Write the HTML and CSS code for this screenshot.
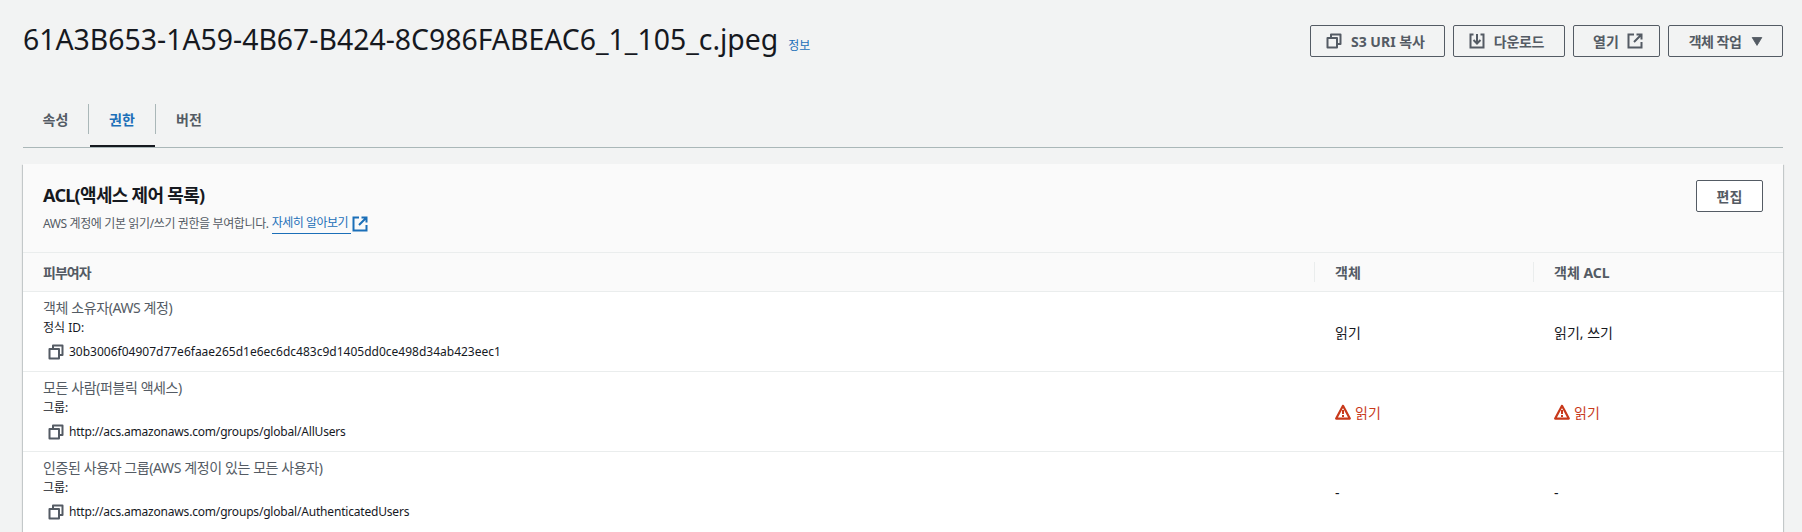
FILE: index.html
```html
<!DOCTYPE html>
<html lang="ko">
<head>
    <meta charset="UTF-8">
    <title>61A3B653-1A59-4B67-B424-8C986FABEAC6_1_105_c.jpeg</title>
    <link rel="stylesheet" href="styles.css">
</head>
<body>
    <svg class="sprites" width="0" height="0">
        <symbol id="i-copy" viewBox="0 0 16 16">
            <path d="M5 5V1.500h9.500V11H11M1.500 5H11v9.500H1.500z" fill="none" stroke="currentColor" stroke-width="2" stroke-linejoin="round"/>
        </symbol>
        <symbol id="i-external" viewBox="0 0 16 16">
            <path d="M7 1.500H1.500v13h13V9M9.500 1.500h5v5M14.500 1.500L7 9" fill="none" stroke="currentColor" stroke-width="2"/>
        </symbol>
        <symbol id="i-warning" viewBox="0 0 16 16">
            <path d="M8 1.800L1.200 14.600h13.600z" fill="none" stroke="currentColor" stroke-width="2.200" stroke-linejoin="round"/>
            <path d="M7 6h2v4H7zM7 11h2v2H7z" fill="currentColor"/>
        </symbol>
    </svg>

    <div class="page">
        <header class="page-head">
            <div class="title-wrap">
                <h1>61A3B653-1A59-4B67-B424-8C986FABEAC6_1_105_c.jpeg</h1>
                <a class="info" href="#">정보</a>
            </div>
            <div class="actions">
                <button class="btn btn-uri"><svg class="icon"><use href="#i-copy"/></svg>S3 URI 복사</button>
                <button class="btn btn-down">
                    <svg class="icon" viewBox="0 0 16 16"><path d="M4.500 1.500h-3v13h13v-13h-3M8 1v9M4.500 7L8 10.500 11.500 7" fill="none" stroke="currentColor" stroke-width="2"/></svg>다운로드
                </button>
                <button class="btn btn-open">열기<svg class="icon"><use href="#i-external"/></svg></button>
                <button class="btn btn-menu">객체 작업<svg class="icon caret" viewBox="0 0 16 16"><path d="M2.500 4h11L8 13z" fill="currentColor" stroke="currentColor" stroke-linejoin="round"/></svg></button>
            </div>
        </header>

        <nav class="tabs">
            <a class="tab" href="#">속성</a>
            <a class="tab active" href="#">권한</a>
            <a class="tab" href="#">버전</a>
        </nav>

        <section class="card">
            <div class="card-head">
                <div>
                    <h2>ACL(액세스 제어 목록)</h2>
                    <p class="desc">AWS 계정에 기본 읽기/쓰기 권한을 부여합니다. <a href="#" class="learn">자세히 알아보기 </a><svg class="icon ext"><use href="#i-external"/></svg></p>
                </div>
                <button class="btn btn-edit">편집</button>
            </div>

            <div class="row row-head">
                <div class="cell grantee-head">피부여자</div>
                <div class="cell"><span class="sep"></span>객체</div>
                <div class="cell"><span class="sep"></span>객체 ACL</div>
            </div>

            <div class="row">
                <div class="cell grantee">
                    <div class="name">객체 소유자(AWS 계정)</div>
                    <div class="kind">정식 ID:</div>
                    <div class="value"><svg class="icon"><use href="#i-copy"/></svg>30b3006f04907d77e6faae265d1e6ec6dc483c9d1405dd0ce498d34ab423eec1</div>
                </div>
                <div class="cell">읽기</div>
                <div class="cell">읽기, 쓰기</div>
            </div>

            <div class="row">
                <div class="cell grantee">
                    <div class="name">모든 사람(퍼블릭 액세스)</div>
                    <div class="kind">그룹:</div>
                    <div class="value url"><svg class="icon"><use href="#i-copy"/></svg>http://acs.amazonaws.com/groups/global/AllUsers</div>
                </div>
                <div class="cell warn"><svg class="icon"><use href="#i-warning"/></svg>읽기</div>
                <div class="cell warn"><svg class="icon"><use href="#i-warning"/></svg>읽기</div>
            </div>

            <div class="row row-last">
                <div class="cell grantee">
                    <div class="name">인증된 사용자 그룹(AWS 계정이 있는 모든 사용자)</div>
                    <div class="kind">그룹:</div>
                    <div class="value url"><svg class="icon"><use href="#i-copy"/></svg>http://acs.amazonaws.com/groups/global/AuthenticatedUsers</div>
                </div>
                <div class="cell">-</div>
                <div class="cell">-</div>
            </div>
        </section>
    </div>
</body>
</html>
```
FILE: styles.css
```css
html, body {
    margin: 0;
    padding: 0;
    height: 532px;
    overflow: hidden;
}

body {
    background-color: #f2f3f3;
    color: #16191f;
    font-family: "Noto Sans", "Noto Sans CJK KR", sans-serif;
    font-size: 14px;
}

a {
    text-decoration: none;
}

.sprites {
    display: block;
    height: 0;
}

.page {
    padding: 0 19px 0 23px;
}

.icon {
    width: 16px;
    height: 16px;
    flex: none;
}

.page-head {
    display: flex;
    justify-content: space-between;
    align-items: flex-start;
    height: 83px;
}

.title-wrap {
    display: flex;
    align-items: baseline;
    gap: 10px;
    padding-top: 19px;
}

h1 {
    margin: 0;
    font-size: 28.400px;
    line-height: 40px;
    font-weight: 400;
    white-space: nowrap;
}

.info {
    color: #1b6fb8;
    font-size: 12px;
}

.actions {
    display: flex;
    gap: 8px;
    padding-top: 25px;
}

.btn {
    display: flex;
    align-items: center;
    justify-content: center;
    gap: 9px;
    height: 32px;
    padding: 0;
    background: transparent;
    border: 1px solid #545b64;
    border-radius: 2px;
    color: #545b64;
    font-family: inherit;
    font-size: 14px;
    font-weight: 700;
}

.btn-uri { width: 135px; padding-right: 4px; }
.btn-down { width: 112px; padding-right: 5px; letter-spacing: -0.300px; }
.btn-open { width: 87px; gap: 8px; padding-left: 3px; }
.btn-menu { width: 115px; gap: 9px; padding-left: 2px; letter-spacing: -0.500px; }
.btn-edit { width: 67px; background: #fff; }

.caret {
    width: 14px;
    height: 14px;
}

.tabs {
    display: flex;
    height: 64px;
    border-bottom: 1px solid #aab7b8;
}

.tab {
    position: relative;
    width: 66px;
    display: flex;
    align-items: center;
    justify-content: center;
    height: 30px;
    margin-top: 21px;
    color: #545b64;
    font-weight: 700;
}

.tab:first-child {
    width: 65px;
}

.tab + .tab {
    border-left: 1px solid #aab7b8;
}

.tab.active {
    color: #1b6fb8;
}

.tab.active::after {
    content: "";
    position: absolute;
    left: 1px;
    right: 0;
    bottom: -13px;
    height: 2px;
    background-color: #16191f;
}

.card {
    margin-top: 16px;
    background-color: #fff;
    box-shadow: 0 1px 1px 0 rgba(0, 28, 36, 0.3), 1px 1px 1px 0 rgba(0, 28, 36, 0.15), -1px 1px 1px 0 rgba(0, 28, 36, 0.15);
}

.card-head {
    display: flex;
    justify-content: space-between;
    height: 72px;
    padding: 16px 20px 0;
    background-color: #fafafa;
    border-bottom: 1px solid #eaeded;
}

h2 {
    margin: 3px 0 0;
    font-size: 18px;
    line-height: 24px;
    font-weight: 700;
    letter-spacing: -0.700px;
}

.desc {
    margin: 6px 0 0;
    color: #545b64;
    font-size: 12px;
    line-height: 20px;
    display: flex;
    align-items: center;
    letter-spacing: -0.380px;
}

.learn {
    color: #1b6fb8;
    border-bottom: 1px solid #1b6fb8;
    white-space: pre;
    margin-left: 3px;
    letter-spacing: -0.500px;
}

.ext {
    color: #1b6fb8;
    margin-left: 1px;
}

.row {
    display: grid;
    grid-template-columns: 1291px 219px 1fr;
    height: 79px;
    border-bottom: 1px solid #eaeded;
}

.row-head {
    height: 38px;
    background-color: #fafafa;
    color: #545b64;
    font-weight: 700;
}

.row-last {
    height: 81px;
    border-bottom: none;
}

.cell {
    position: relative;
    display: flex;
    align-items: center;
    gap: 4px;
    padding-left: 21px;
}

.grantee-head {
    padding-left: 20px;
    letter-spacing: -1px;
}

.sep {
    position: absolute;
    left: 0;
    top: 9px;
    height: 20px;
    border-left: 1px solid #eaeded;
}

.grantee {
    display: block;
    padding: 5px 0 0 20px;
}

.name {
    color: #545b64;
    line-height: 22px;
    letter-spacing: -0.400px;
}

.kind {
    margin-top: 1px;
    font-size: 12px;
    line-height: 16px;
}

.value {
    display: flex;
    align-items: center;
    gap: 5px;
    margin: 8px 0 0 5px;
    font-size: 12px;
    line-height: 16px;
}

.url {
    letter-spacing: -0.190px;
}

.value .icon {
    width: 16px;
    height: 16px;
    color: #545b64;
}

.warn {
    color: #c8391b;
}
```
